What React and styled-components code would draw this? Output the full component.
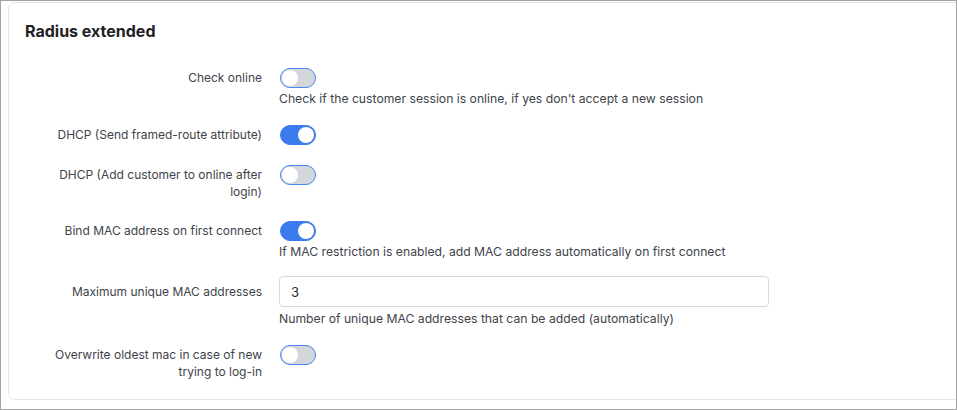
import React from "react";
import styled, { createGlobalStyle } from "styled-components";

const Global = createGlobalStyle`
  html, body { margin: 0; padding: 0; background: #fff; }
  body { font-family: Inter, "Noto Sans", "Liberation Sans", sans-serif; }
  * { box-sizing: border-box; }
`;

const Frame = styled.div`
  width: 957px;
  height: 410px;
  border: 1px solid #a3a3a3;
  overflow: hidden;
  padding: 1px 0 0 7px;
  background: #fff;
`;

const Card = styled.section`
  width: 980px;
  border: 1px solid #e3e5e8;
  border-radius: 7px;
  padding: 18px 0 16px 16px;
  background: #fff;
`;

const Title = styled.h2`
  margin: 0 0 25px;
  font-size: 16px;
  line-height: 20px;
  font-weight: 700;
  color: #1f2125;
`;

const Row = styled.div`
  display: grid;
  grid-template-columns: 237px 1fr;
  column-gap: 17px;
  align-items: start;
  margin-bottom: 16px;
  &:last-child { margin-bottom: 0; }
`;

const Label = styled.div`
  text-align: right;
  font-size: 12px;
  line-height: 17px;
  padding: ${(p) => (p.$input ? "7px" : "3px")} 0 3px 15px;
  color: #404349;
`;

const Control = styled.div`
  display: flex;
  flex-direction: column;
  align-items: flex-start;
`;

const ToggleWrap = styled.div`
  height: 24px;
  display: flex;
  align-items: center;
  padding-left: 1px;
`;

const Track = styled.span`
  position: relative;
  display: inline-block;
  width: 36px;
  height: 20px;
  border-radius: 10px;
  border: 1px solid ${(p) => (p.$on ? "#3b7bed" : "#4a86f0")};
  background: ${(p) => (p.$on ? "#3b7bed" : "#d3d6db")};
`;

const Knob = styled.span`
  position: absolute;
  top: 1px;
  left: ${(p) => (p.$on ? "17px" : "1px")};
  width: 16px;
  height: 16px;
  border-radius: 50%;
  background: #fff;
`;

const Help = styled.div`
  margin-top: ${(p) => p.$mt || 1}px;
  font-size: 12.2px;
  line-height: 16px;
  color: #404349;
`;

const Input = styled.input`
  width: 490px;
  height: 31px;
  border: 1px solid #d6d9dd;
  border-radius: 4px;
  padding: 0 11px;
  font-family: inherit;
  font-size: 13px;
  color: #2b2d31;
  outline: none;
  background: #fff;
`;

const Toggle = ({ on }) => (
  <ToggleWrap>
    <Track $on={on}>
      <Knob $on={on} />
    </Track>
  </ToggleWrap>
);

const rows = [
  { label: "Check online", on: false, help: "Check if the customer session is online, if yes don't accept a new session" },
  { label: "DHCP (Send framed-route attribute)", on: true },
  { label: "DHCP (Add customer to online after login)", on: false },
  { label: "Bind MAC address on first connect", on: true, help: "If MAC restriction is enabled, add MAC address automatically on first connect" },
  { label: "Maximum unique MAC addresses", input: "3", help: "Number of unique MAC addresses that can be added (automatically)" },
  { label: "Overwrite oldest mac in case of new trying to log-in", on: false },
];

export default function App() {
  return (
    <>
      <Global />
      <Frame>
        <Card>
          <Title>Radius extended</Title>
          {rows.map((r) => (
            <Row key={r.label}>
              <Label $input={!!r.input}>{r.label}</Label>
              <Control>
                {r.input ? <Input defaultValue={r.input} /> : <Toggle on={r.on} />}
                {r.help && <Help $mt={r.input ? 4 : 1}>{r.help}</Help>}
              </Control>
            </Row>
          ))}
        </Card>
      </Frame>
    </>
  );
}
